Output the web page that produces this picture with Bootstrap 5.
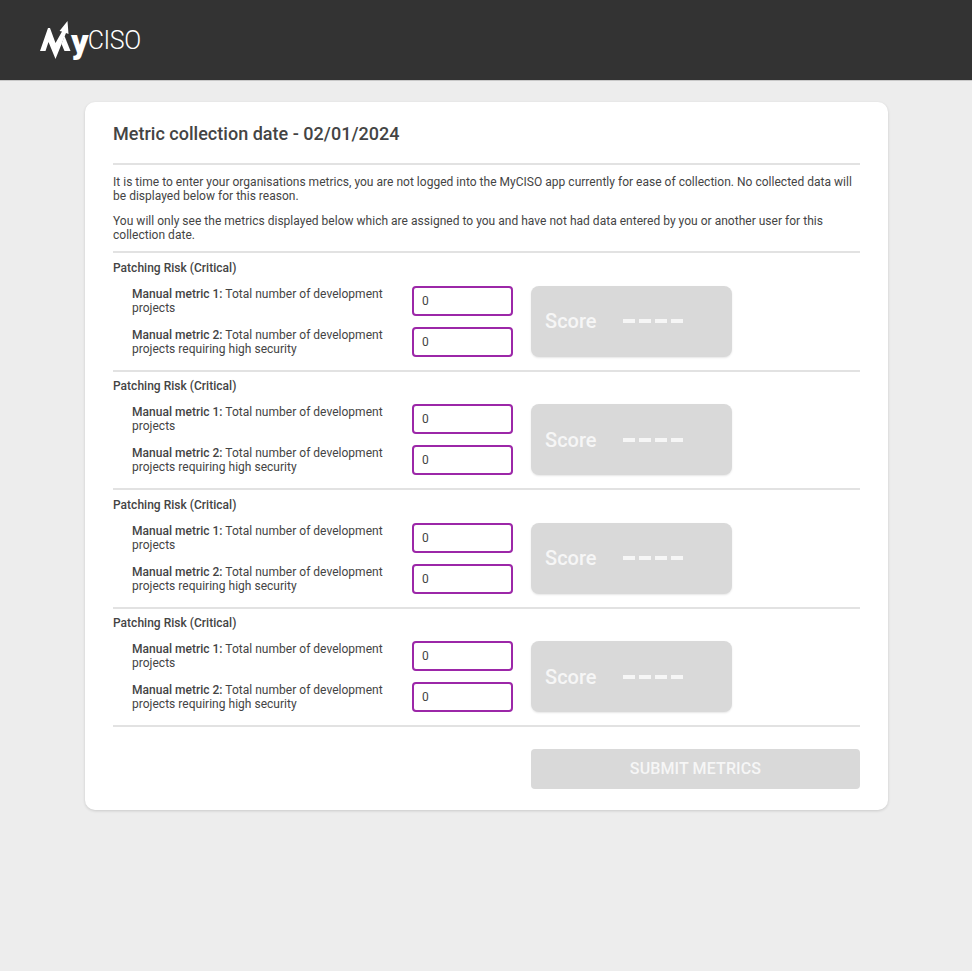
<!DOCTYPE html>
<html lang="en">

<head>
    <meta charset="UTF-8">
    <meta name="viewport" content="width=device-width, initial-scale=1.0">
    <title>MyCISO - Metric collection</title>
    <link href="https://cdn.jsdelivr.net/npm/bootstrap@5.3.0/dist/css/bootstrap.min.css" rel="stylesheet">
    <script src="https://cdn.jsdelivr.net/npm/bootstrap@5.3.0/dist/js/bootstrap.bundle.min.js"></script>
    <style>
        body {
            background-color: #ededed;
            font-family: Roboto, "Liberation Sans", sans-serif;
            color: #444;
            font-size: 12px;
            line-height: 14px;
            letter-spacing: .02px;
            min-height: 971px;
        }

        .top-bar {
            background: #333;
            height: 81px;
            padding-left: 40px;
            border-bottom: 1px solid #c8c8c8;
        }

        .logo-y {
            font-weight: 900;
            font-size: 34px;
            line-height: 34px;
            margin-left: -1px;
            margin-top: 2px;
        }

        .logo-ciso {
            font-weight: 300;
            font-size: 25px;
            line-height: 32px;
            letter-spacing: -.4px;
            margin-top: 2px;
            margin-left: -1px;
        }

        .sheet {
            width: 803px;
            height: 708px;
            margin: 21px 0 0 85px;
            padding: 21px 28px 0;
            background: #fff;
            border-radius: 10px;
            box-shadow: 0 1px 3px rgba(0, 0, 0, .15);
        }

        .sheet-title {
            font-size: 18px;
            line-height: 21px;
            font-weight: 500;
            margin: 0 0 19px;
        }

        .rule {
            height: 2px;
            background: #e2e2e2;
        }

        .intro {
            padding-top: 10px;
        }

        .intro p {
            margin: 0 0 11px;
        }

        .intro p:last-child {
            margin-bottom: 9px;
        }

        .metric-group {
            height: 116.5px;
            padding-top: 7.75px;
        }

        .group-name {
            font-weight: 500;
            margin-bottom: 11px;
        }

        .metric-rows {
            gap: 11px;
        }

        .metric-label {
            width: 299px;
            padding-left: 19px;
            padding-right: 27px;
        }

        .metric-label b {
            font-weight: 500;
        }

        .metric-input {
            width: 101px;
            height: 30px;
            border: 2px solid #9c27a8;
            border-radius: 4px;
            padding: 0 8px;
            font-size: 12px;
            color: #444;
            box-shadow: none;
        }

        .score-box {
            width: 201px;
            height: 71px;
            margin-left: 17.5px;
            padding-left: 14.5px;
            background: #d9d9d9;
            border-radius: 8px;
            box-shadow: 0 1px 2px rgba(0, 0, 0, .1);
            color: #f6f6f6;
            font-size: 20px;
            font-weight: 500;
        }

        .dash-row {
            margin-left: 26px;
            gap: 4px;
        }

        .dash-row span {
            width: 12px;
            height: 4px;
            background: #f6f6f6;
        }

        .submit-metrics {
            width: 329px;
            height: 40px;
            margin: 22px 0 0 auto;
            background: #d9d9d9;
            border: 0;
            border-radius: 4px;
            color: #f6f6f6;
            font-size: 16px;
            font-weight: 500;
            letter-spacing: .12px;
        }
    </style>
</head>

<body>
    <div class="top-bar d-flex align-items-center">
        <svg width="32" height="40" viewBox="40 18 32 40">
            <path fill="#fff" d="M40 49 L48 26 L50 26 L55.500 41 L62 29.500 L59.500 29 L67.500 19 L68.500 32 L66 31 L55.500 57 L48.500 40 L45.500 49 Z" />
            <path fill="#fff" d="M61.500 42 L64.500 34 L70.500 49 L64.500 49 Z" />
        </svg>
        <span class="logo-y text-white">y</span>
        <span class="logo-ciso text-white">CISO</span>
    </div>

    <div class="sheet">
        <h1 class="sheet-title">Metric collection date - 02/01/2024</h1>
        <div class="rule"></div>
        <div class="intro">
            <p>It is time to enter your organisations metrics, you are not logged into the MyCISO app currently for ease of collection. No collected data will be displayed below for this reason.</p>
            <p>You will only see the metrics displayed below which are assigned to you and have not had data entered by you or another user for this collection date.</p>
        </div>
        <div class="rule"></div>

        <div id="groups"></div>

        <div class="d-flex">
            <button class="submit-metrics" type="button" disabled>SUBMIT METRICS</button>
        </div>
    </div>

    <template id="groupTpl">
        <div class="metric-group">
            <div class="group-name">Patching Risk (Critical)</div>
            <div class="d-flex">
                <div class="metric-rows d-flex flex-column">
                    <div class="d-flex align-items-center">
                        <div class="metric-label"><b>Manual metric 1:</b> Total number of development projects</div>
                        <input class="form-control metric-input" value="0">
                    </div>
                    <div class="d-flex align-items-center">
                        <div class="metric-label"><b>Manual metric 2:</b> Total number of development projects requiring high security</div>
                        <input class="form-control metric-input" value="0">
                    </div>
                </div>
                <div class="score-box d-flex align-items-center">
                    <span>Score</span>
                    <div class="dash-row d-flex"><span></span><span></span><span></span><span></span></div>
                </div>
            </div>
        </div>
        <div class="rule"></div>
    </template>

    <script>
        // same block four times
        let tpl = document.getElementById("groupTpl");
        let groups = document.getElementById("groups");
        for (let i = 0; i < 4; i++) {
            groups.appendChild(tpl.content.cloneNode(true));
        }
    </script>
</body>

</html>
